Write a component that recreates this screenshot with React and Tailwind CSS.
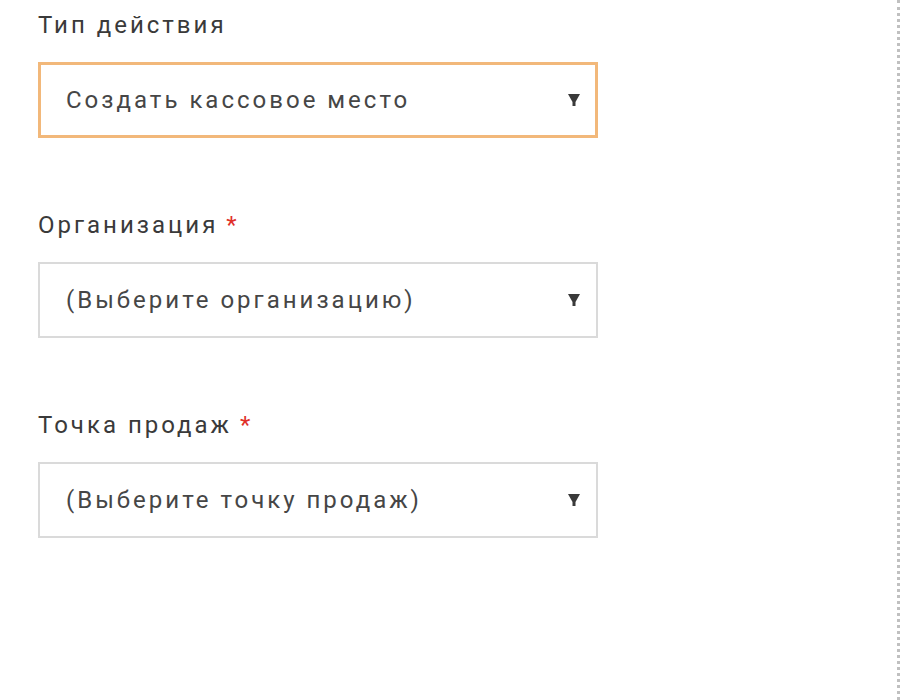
import React from "react";

function Arrow() {
  return (
    <svg width="12" height="12" viewBox="0 0 12 12" className="shrink-0">
      <path d="M0 0 H12 L7.5 8 V12 H4.5 V8 Z" fill="#3a3a3a" />
    </svg>
  );
}

function Field({ label, required, value, focused }) {
  return (
    <div className="flex flex-col">
      <div className="h-[50px] flex items-center text-[24px] tracking-[3px] text-[#3a3a3a] leading-none">
        <span>{label}</span>
        {required && <span className="ml-[8px] text-[#e0302a]">*</span>}
      </div>
      <div
        className={
          focused
            ? "mt-[12px] h-[76px] w-[560px] flex items-center justify-between pl-[25px] pr-[15px] border-[3px] border-[#f2b87a] bg-white"
            : "mt-[12px] h-[76px] w-[560px] flex items-center justify-between pl-[26px] pr-[16px] border-[2px] border-[#dadada] bg-white"
        }
      >
        <span className="text-[24px] tracking-[3px] text-[#464646]">{value}</span>
        <Arrow />
      </div>
    </div>
  );
}

export default function App() {
  return (
    <div
      className="w-[900px] h-[700px] bg-white flex"
      style={{ fontFamily: "Roboto, 'Noto Sans', sans-serif" }}
    >
      <div className="flex-1 h-full border-r-[3px] border-dotted border-[#c0c0c0] pl-[38px] flex flex-col gap-[62px]">
        <Field label="Тип действия" value="Создать кассовое место" focused />
        <Field label="Организация" required value="(Выберите организацию)" />
        <Field label="Точка продаж" required value="(Выберите точку продаж)" />
      </div>
    </div>
  );
}
